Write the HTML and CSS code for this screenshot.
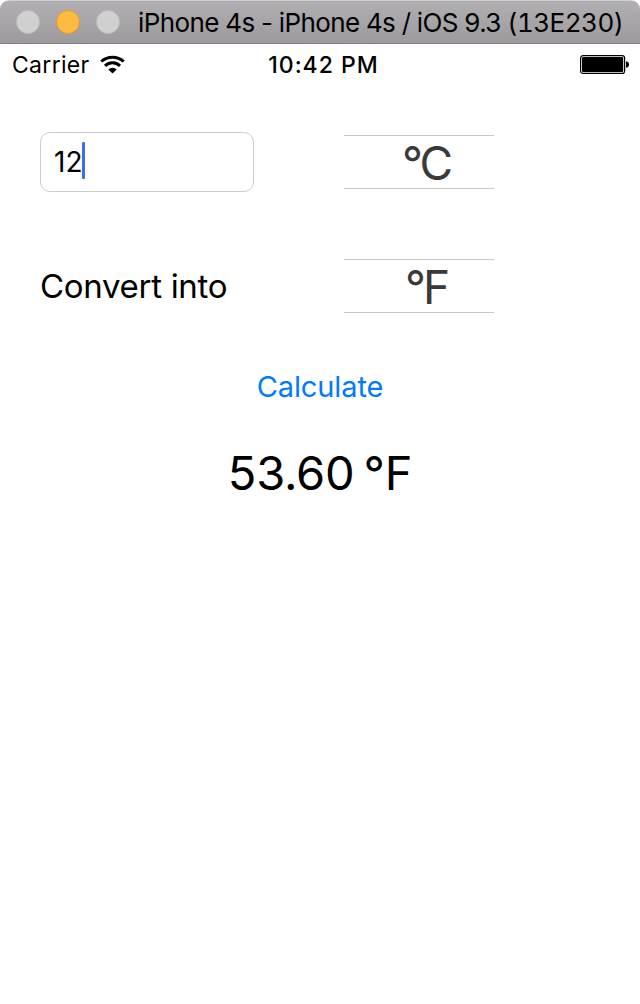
FILE: index.html
```html
<!DOCTYPE html>
<html lang="en">
<head>
<meta charset="utf-8">
<title>iPhone 4s</title>
<link rel="stylesheet" href="styles.css">
</head>
<body>
<div class="window">
  <header class="titlebar">
    <span class="light"></span>
    <span class="light light-min"></span>
    <span class="light"></span>
    <h1 class="title">iPhone 4s - iPhone 4s / iOS 9.3 <span class="build">(13E230)</span></h1>
  </header>
  <div class="status">
    <div class="status-left">
      <span class="carrier">Carrier</span>
      <svg class="wifi" width="26" height="20" viewBox="0 0 26 20">
        <path d="M1.3 6.5A16.8 16.8 0 0 1 23.7 6.5" fill="none" stroke="#000" stroke-width="3"/>
        <path d="M5 10.9A10.8 10.8 0 0 1 20 10.9" fill="none" stroke="#000" stroke-width="3"/>
        <path d="M8.3 14.5A5.8 5.8 0 0 1 16.7 14.5L12.5 18.6Z"/>
      </svg>
    </div>
    <span class="time">10:42 PM</span>
    <svg class="battery" width="50" height="20" viewBox="0 0 50 20">
      <rect x=".6" y=".6" width="44" height="17.8" rx="2.5" fill="none" stroke="#000" stroke-width="1.2"/>
      <rect x="2" y="2" width="41.2" height="15" rx="1.2"/>
      <path d="M46 6.2C48 6.6 49 7.6 49 9.5S48 12.4 46 12.8Z"/>
    </svg>
  </div>
  <main class="content">
    <div class="row">
      <div class="field"><span class="value">12</span><span class="caret"></span></div>
      <div class="picker picker-c"><span class="unit">°C</span></div>
    </div>
    <div class="row row-into">
      <span class="label">Convert into</span>
      <div class="picker picker-f"><span class="unit">°F</span></div>
    </div>
    <button class="calculate">Calculate</button>
    <output class="result">53.60 °F</output>
  </main>
</div>
</body>
</html>
```
FILE: styles.css
```css
* { box-sizing: border-box; }
body { margin: 0; background: #fff; color: #000; font-family: Inter, "Liberation Sans", sans-serif; }
.window { height: 1004px; background: #fff; overflow: hidden; white-space: nowrap; }
.titlebar {
  display: flex; align-items: center; gap: 16px;
  height: 44px; padding: 0 0 0 16px;
  background: linear-gradient(#b1afb1, #9c9a9c);
  border-top: 1px solid #d0ced0; border-bottom: 1px solid #807e80;
  border-radius: 9px 9px 0 0;
}
.light { flex: none; width: 24px; height: 24px; border-radius: 50%; background: #d0d0d0; border: 1px solid #bebdbe; }
.light-min { background: #fdbc40; border-color: #e79b2b; }
.title { margin: 2px 0 0 2px; font-size: 26px; font-weight: 400; line-height: 40px; letter-spacing: -.6px; word-spacing: -.3px; }
.build { letter-spacing: -.5px; font-variant-numeric: tabular-nums; }
.status { display: grid; grid-template-columns: 1fr auto 1fr; height: 42px; padding: 0 10px 0 12px; align-items: center; font-size: 23px; line-height: 42px; }
.status-left { display: flex; align-items: center; gap: 10px; }
.carrier { letter-spacing: .3px; }
.time { font-weight: 500; letter-spacing: 1px; padding-left: 5px; }
.battery { justify-self: end; }
.content { display: flex; flex-direction: column; align-items: center; padding-top: 46px; }
.row { display: flex; width: 640px; height: 60px; padding: 0 146px 0 40px; align-items: center; justify-content: space-between; }
.row-into { margin-top: 64px; }
.field { display: flex; align-items: center; width: 214px; height: 60px; padding-left: 13px; border: 1px solid #ccc; border-radius: 10px; }
.value { font-size: 28px; line-height: 58px; }
.caret { width: 3px; height: 37px; margin-bottom: 3px; background: #426bf2; border-radius: 1px; }
.picker { width: 150px; height: 54px; border-top: 1px solid #c8c8c8; border-bottom: 1px solid #c8c8c8; color: #3a3a3a; font-size: 46px; line-height: 54px; letter-spacing: -3px; }
.picker-c { padding-left: 58px; }
.picker-f { padding-left: 61px; }
.label { font-size: 33px; line-height: 60px; letter-spacing: -.3px; }
.calculate { margin-top: 41px; padding: 0; border: 0; background: none; color: #007aff; font: 29px/60px Inter, sans-serif; letter-spacing: -.1px; }
.result { margin-top: 26px; font-size: 47px; line-height: 60px; letter-spacing: -.2px; word-spacing: -4px; }
```
